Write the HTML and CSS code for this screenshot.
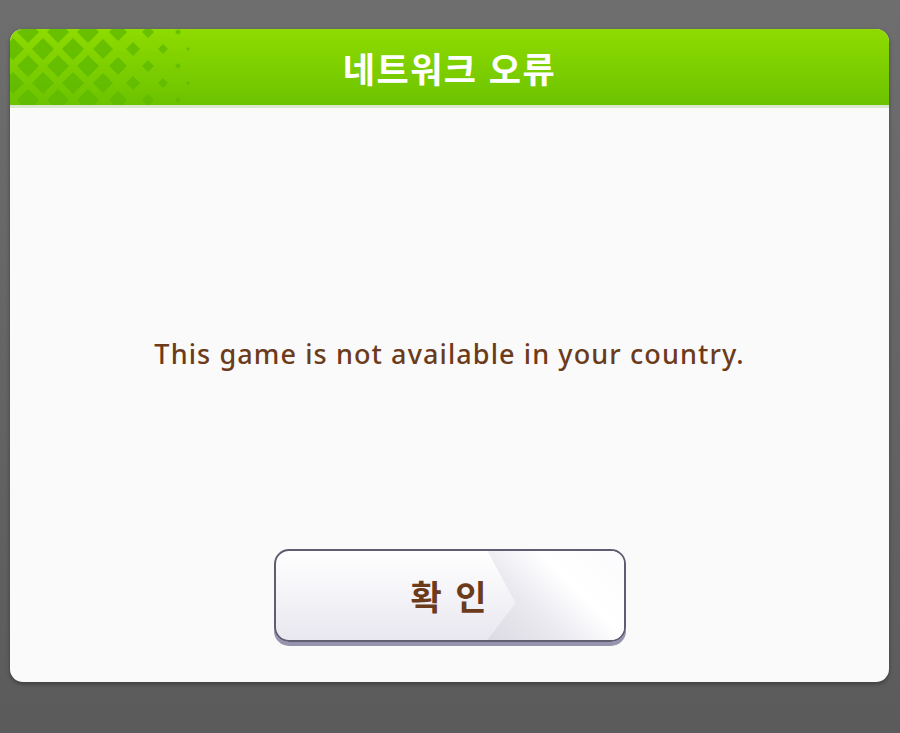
FILE: index.html
```html
<!DOCTYPE html>
<html lang="ko">
<head>
<meta charset="utf-8">
<link rel="stylesheet" href="styles.css">
</head>
<body>
<div class="screen">
  <div class="dialog">
    <div class="header">
      <svg class="pattern" width="200" height="76" viewBox="0 0 200 76" aria-hidden="true">
        <g fill="#5fba00" opacity="0.8">
          <polygon points="18,-8 29,3 18,14 7,3"/>
          <polygon points="48,-8 59,3 48,14 37,3"/>
          <polygon points="78,-8 89,3 78,14 67,3"/>
          <polygon points="108,-6 117,3 108,12 99,3"/>
          <polygon points="138,-3 144,3 138,9 132,3"/>
          <polygon points="168,0 171,3 168,6 165,3"/>

          <polygon points="3,9 14,20 3,31 -8,20"/>
          <polygon points="33,9 44,20 33,31 22,20"/>
          <polygon points="63,9 74,20 63,31 52,20"/>
          <polygon points="93,10 103,20 93,30 83,20"/>
          <polygon points="123,13 130,20 123,27 116,20"/>
          <polygon points="153,15 158,20 153,25 148,20"/>
          <polygon points="178,18 180,20 178,22 176,20"/>

          <polygon points="18,26 29,37 18,48 7,37"/>
          <polygon points="48,26 59,37 48,48 37,37"/>
          <polygon points="78,26 89,37 78,48 67,37"/>
          <polygon points="108,28 117,37 108,46 99,37"/>
          <polygon points="138,31 144,37 138,43 132,37"/>
          <polygon points="168,34 171,37 168,40 165,37"/>

          <polygon points="3,43 14,54 3,65 -8,54"/>
          <polygon points="33,43 44,54 33,65 22,54"/>
          <polygon points="63,43 74,54 63,65 52,54"/>
          <polygon points="93,44 103,54 93,64 83,54"/>
          <polygon points="123,47 130,54 123,61 116,54"/>
          <polygon points="153,49 158,54 153,59 148,54"/>
          <polygon points="178,52 180,54 178,56 176,54"/>

          <polygon points="18,60 29,71 18,82 7,71"/>
          <polygon points="48,60 59,71 48,82 37,71"/>
          <polygon points="78,60 89,71 78,82 67,71"/>
          <polygon points="108,62 117,71 108,80 99,71"/>
          <polygon points="138,65 144,71 138,77 132,71"/>
          <polygon points="168,68 171,71 168,74 165,71"/>
        </g>
      </svg>
      <h1 class="title">네트워크 오류</h1>
    </div>
    <div class="body">
      <p class="message">This game is not available in your country.</p>
      <button class="ok-button" type="button"><span class="ok-label">확 인</span></button>
    </div>
  </div>
</div>
</body>
</html>
```

FILE: styles.css
```css
* { box-sizing: border-box; }
html, body {
  margin: 0;
  padding: 0;
}
body {
  width: 900px;
  height: 733px;
  overflow: hidden;
  background: linear-gradient(#6e6e6e, #5b5b5b);
  font-family: "Noto Sans", "Noto Sans CJK KR", sans-serif;
}
.screen {
  padding: 29px 11px 0 10px;
}
.dialog {
  width: 879px;
  height: 653px;
  border-radius: 13px;
  overflow: hidden;
  background: #fafafa;
  display: flex;
  flex-direction: column;
  box-shadow: 0 2px 4px rgba(0,0,0,0.35);
}
.header {
  position: relative;
  height: 79px;
  flex: none;
  background: linear-gradient(#8fdb00, #6cc300);
  border-bottom: 3px solid #dbe8cf;
  display: flex;
  align-items: center;
  justify-content: center;
}
.pattern {
  position: absolute;
  left: 0;
  top: 0;
}
.title {
  position: relative;
  margin: 0;
  color: #ffffff;
  font-family: "Noto Sans CJK KR", sans-serif;
  font-weight: 700;
  font-size: 35px;
  letter-spacing: 1.5px;
  line-height: 1;
}
.body {
  flex: 1;
  display: flex;
  flex-direction: column;
  align-items: center;
}
.message {
  margin: 228px 0 0 0;
  color: #6b3b1b;
  font-family: "Noto Sans", sans-serif;
  font-size: 27px;
  font-weight: 500;
  line-height: 36px;
  letter-spacing: 1.1px;
}
.ok-button {
  position: relative;
  margin-top: 177px;
  width: 352px;
  height: 93px;
  border: 2px solid #5f5d72;
  border-radius: 15px;
  background: linear-gradient(#ffffff, #e9e7ef);
  box-shadow: 0 4px 0 #9593ad;
  overflow: hidden;
  padding: 0;
  cursor: pointer;
}
.ok-button::before {
  content: "";
  position: absolute;
  left: 212px;
  top: 0;
  width: 140px;
  height: 100%;
  background: linear-gradient(45deg, #dcdbe3 0%, #ebeaf0 35%, #ffffff 60%, #fbfbfd 100%);
  clip-path: polygon(0 0, 100% 0, 100% 100%, 0 100%, 28px 52px);
}
.ok-label {
  position: relative;
  color: #6b3b1b;
  font-family: "Noto Sans CJK KR", sans-serif;
  font-weight: 700;
  font-size: 34px;
  letter-spacing: 2px;
  line-height: 1;
}
```
